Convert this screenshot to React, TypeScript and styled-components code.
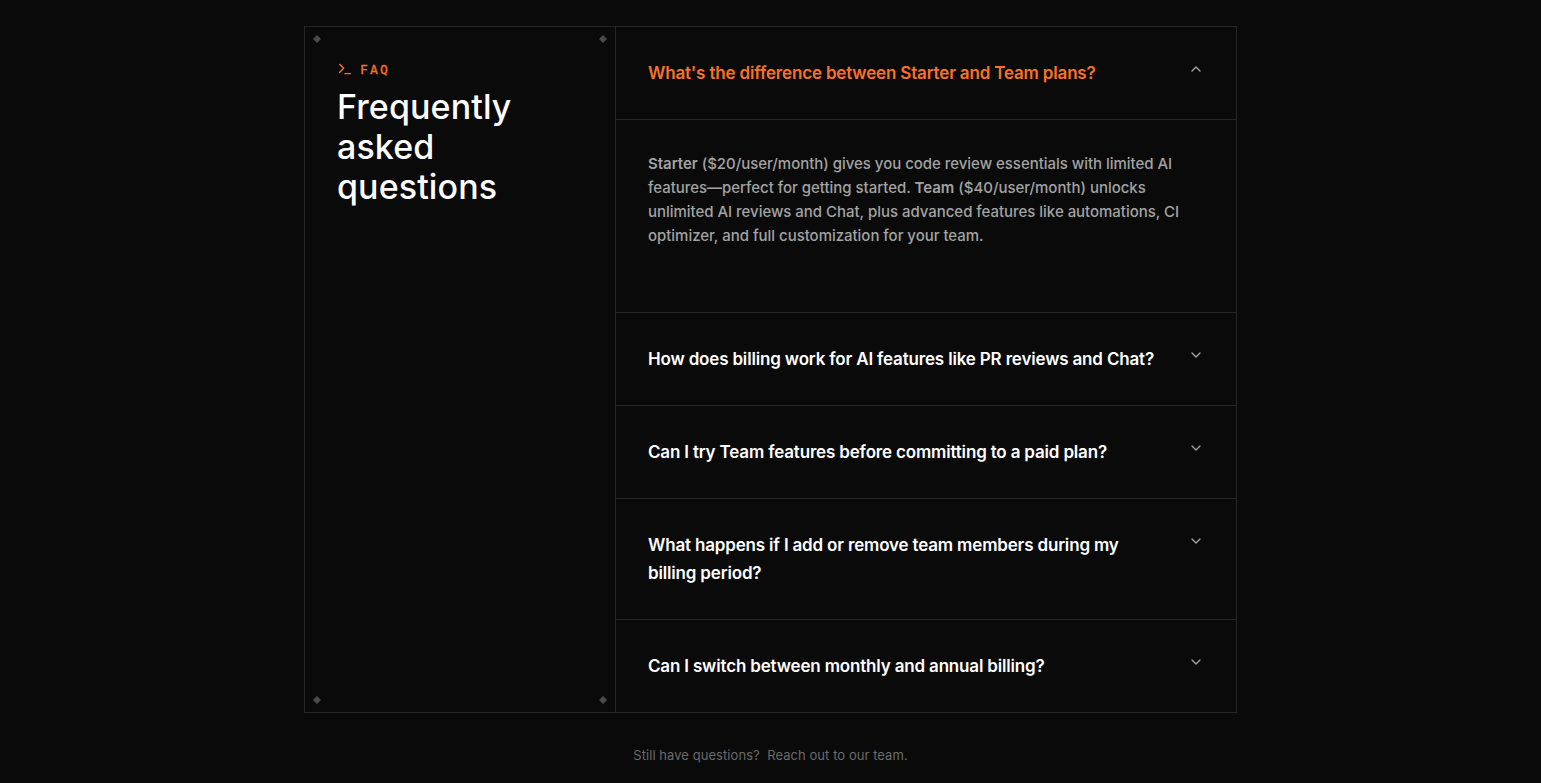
import React, { useState } from 'react';
import styled, { createGlobalStyle } from 'styled-components';
import { ChevronDown, ChevronUp, Terminal } from 'lucide-react';

const Global = createGlobalStyle`
  html, body {
    margin: 0;
    background: #0a0a0a;
    font-family: Inter, "Noto Sans", sans-serif;
  }
`;

const Page = styled.div`
  height: 783px;
  padding-top: 26px;
  box-sizing: border-box;
  overflow: hidden;
`;

const Frame = styled.section`
  width: 933px;
  margin: 0 auto;
  display: grid;
  grid-template-columns: 311px 1fr;
  height: 687px;
  box-sizing: border-box;
  border: 1px solid #262626;
`;

const Side = styled.div`
  position: relative;
  box-sizing: border-box;
  border-right: 1px solid #262626;
  padding: 32px;
`;

const Corner = styled.span<{ $top?: boolean; $left?: boolean }>`
  position: absolute;
  width: 8px;
  height: 8px;
  background: #4a4a4a;
  clip-path: polygon(50% 0, 100% 50%, 50% 100%, 0 50%);
  ${(p) => (p.$top ? 'top: 8px;' : 'bottom: 8px;')}
  ${(p) => (p.$left ? 'left: 8px;' : 'right: 8px;')}
`;

const Eyebrow = styled.div`
  display: flex;
  align-items: center;
  gap: 7px;
  height: 20px;
  color: #fb7125;
  font-family: "DejaVu Sans Mono", monospace;
  font-size: 13px;
  letter-spacing: 2.2px;
  -webkit-text-stroke: 0.3px #fb7125;
`;

const Title = styled.h2`
  margin: 8px 0 0;
  color: #fff;
  font-size: 34px;
  line-height: 40px;
  font-weight: 500;
  letter-spacing: 0.1px;
`;

const List = styled.div`
  display: flex;
  flex-direction: column;
`;

const Item = styled.div`
  border-bottom: 1px solid #262626;
  &:last-child {
    border-bottom: 0;
  }
`;

const Question = styled.button<{ $open: boolean }>`
  width: 100%;
  box-sizing: border-box;
  display: flex;
  justify-content: space-between;
  align-items: flex-start;
  gap: 32px;
  padding: 32px;
  background: none;
  border: 0;
  border-bottom: ${(p) => (p.$open ? '1px solid #262626' : '0')};
  color: ${(p) => (p.$open ? '#fb7125' : '#fff')};
  font-family: inherit;
  font-size: 17px;
  line-height: 28px;
  font-weight: 600;
  letter-spacing: -0.17px;
  text-align: left;
  cursor: pointer;
  svg {
    flex: none;
    margin-top: 2px;
    color: #a3a3a3;
  }
`;

const Answer = styled.p`
  margin: 0;
  padding: 32px 32px 64px;
  color: #a3a3a3;
  font-size: 15px;
  line-height: 24px;
  font-weight: 450;
  letter-spacing: -0.03px;
  strong {
    font-weight: 600;
  }
`;

const Note = styled.p`
  margin: 32px 0 0;
  color: #6b6b6b;
  font-size: 13px;
  line-height: 20px;
  letter-spacing: 0.06px;
  text-align: center;
`;

const questions = [
  "What's the difference between Starter and Team plans?",
  'How does billing work for AI features like PR reviews and Chat?',
  'Can I try Team features before committing to a paid plan?',
  'What happens if I add or remove team members during my billing period?',
  'Can I switch between monthly and annual billing?',
];

export default function App() {
  const [open, setOpen] = useState(0);

  return (
    <Page>
      <Global />
      <Frame>
        <Side>
          <Corner $top $left />
          <Corner $top />
          <Corner $left />
          <Corner />
          <Eyebrow>
            <Terminal size={16} strokeWidth={2} />
            FAQ
          </Eyebrow>
          <Title>
            Frequently
            <br />
            asked
            <br />
            questions
          </Title>
        </Side>
        <List>
          {questions.map((q, i) => (
            <Item key={q}>
              <Question type="button" $open={open === i} onClick={() => setOpen(open === i ? -1 : i)}>
                {q}
                {open === i ? <ChevronUp size={16} /> : <ChevronDown size={16} />}
              </Question>
              {open === i && i === 0 && (
                <Answer>
                  <strong>Starter</strong> ($20/user/month) gives you code review essentials with limited AI
                  features—perfect for getting started. <strong>Team</strong> ($40/user/month) unlocks unlimited AI
                  reviews and Chat, plus advanced features like automations, CI optimizer, and full customization for
                  your team.
                </Answer>
              )}
            </Item>
          ))}
        </List>
      </Frame>
      <Note>Still have questions?&nbsp; Reach out to our team.</Note>
    </Page>
  );
}
